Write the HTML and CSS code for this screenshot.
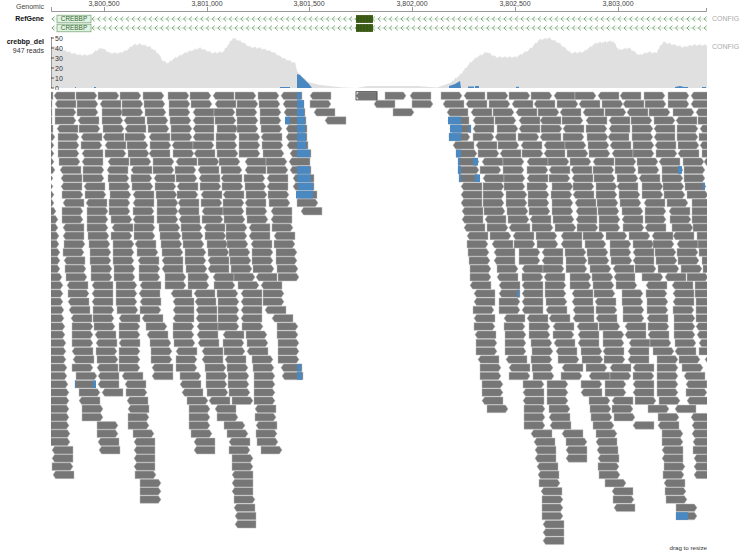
FILE: index.html
```html
<!DOCTYPE html>
<html lang="en">
<head>
  <meta charset="UTF-8">
  <title>crebbp_del</title>
  <link rel="stylesheet" href="styles.css">
</head>
<body>
  <div class="browser">
    <div class="track ruler-track">
      <div class="track-name plain">Genomic</div>
      <svg id="ruler" class="canvas" width="656" height="13" viewBox="51 0 656 13"></svg>
    </div>
    <div class="track gene-track">
      <div class="track-name">RefGene</div>
      <svg id="genes" class="canvas" width="656" height="22" viewBox="51 13 656 22"></svg>
      <div class="config">CONFIG</div>
    </div>
    <div class="track coverage-track">
      <div class="track-name">
        crebbp_del
        <span class="reads-count">947 reads</span>
      </div>
      <svg id="coverage" class="canvas" width="656" height="55" viewBox="51 35 656 55"></svg>
      <div class="config">CONFIG</div>
    </div>
    <div class="track reads-track">
      <div class="track-name"></div>
      <svg id="reads" class="canvas" width="656" height="456" viewBox="51 90 656 456"></svg>
    </div>
    <div class="resize-row">drag to resize</div>
  </div>
  <script src="tracks.js"></script>
</body>
</html>
```
FILE: styles.css
```css
body {
  margin: 0;
  background: #fff;
  font-family: "Liberation Sans", Arial, sans-serif;
  font-size: 7px;
  color: #222;
}

.browser {
  width: 746px;
  height: 554px;
  overflow: hidden;
}

.track {
  display: flex;
}

.track-name {
  width: 44px;
  margin-right: 7px;
  flex: none;
  text-align: right;
  font-weight: bold;
  color: #111;
}

.track-name.plain {
  font-weight: normal;
  color: #444;
  padding-top: 3px;
}

.canvas {
  display: block;
  flex: none;
}

.ruler-track {
  height: 13px;
}

.gene-track {
  height: 22px;
}

.gene-track .track-name {
  padding-top: 2px;
}

.coverage-track {
  height: 55px;
}

.coverage-track .track-name {
  padding-top: 2px;
  line-height: 9px;
}

.reads-count {
  display: block;
  font-weight: normal;
  color: #333;
}

.reads-track {
  height: 456px;
}

.config {
  margin-left: 5px;
  color: #aaa;
}

.gene-track .config {
  padding-top: 2px;
}

.coverage-track .config {
  padding-top: 8px;
}

.resize-row {
  width: 707px;
  margin-top: -2px;
  text-align: right;
  font-size: 6.2px;
  color: #333;
  line-height: 7px;
}

/* svg bits */
.tick-line {
  stroke: #999;
  stroke-width: 1;
  fill: none;
}

.tick-label {
  font-size: 7px;
  fill: #444;
  text-anchor: middle;
}

.gene-line {
  stroke: #b5d0b5;
  stroke-width: 0.6;
}

.chevron {
  stroke: #5d955d;
  stroke-width: 0.8;
  fill: none;
}

.gene-box {
  fill: #e3f1e3;
  stroke: #6fa36f;
  stroke-width: 0.7;
}

.gene-text {
  font-size: 6.4px;
  fill: #2e6b2e;
  text-anchor: middle;
}

.exon {
  fill: #3d5e16;
}

.exon-mark {
  stroke: #2f4a10;
  stroke-width: 0.6;
}

.cov-area {
  fill: #e0e0e0;
}

.cov-blue {
  fill: #4a88c2;
}

.axis-line {
  stroke: #999;
  stroke-width: 1;
}

.axis-tick {
  stroke: #333;
  stroke-width: 0.8;
}

.axis-label {
  font-size: 7px;
  fill: #333;
}

.read {
  fill: #767676;
  stroke: #bdbdbd;
  stroke-width: 0.5;
}

.read-box {
  fill: none;
  stroke: #333;
  stroke-width: 0.8;
}

.read-blue {
  fill: #4a88c2;
}
```
FILE: tracks.js
```js
const NS = 'http://www.w3.org/2000/svg';

function add(parent, tag, attrs, text) {
  const el = document.createElementNS(NS, tag);
  for (const k in attrs) el.setAttribute(k, attrs[k]);
  if (text) el.textContent = text;
  parent.appendChild(el);
  return el;
}

// ruler
const ruler = document.getElementById('ruler');
add(ruler, 'path', { class: 'tick-line', d: 'M51.5 7V11.5H706.5V8' });
[[104, '3,800,500'], [207, '3,801,000'], [309, '3,801,500'], [412, '3,802,000'], [515, '3,802,500'], [618, '3,803,000']].forEach(([x, label]) => {
  add(ruler, 'line', { class: 'tick-line', x1: x + 0.5, x2: x + 0.5, y1: 7, y2: 11 });
  add(ruler, 'text', { class: 'tick-label', x: x, y: 6 }, label);
});

// gene rows
const genes = document.getElementById('genes');
[19, 28].forEach(y => {
  add(genes, 'line', { class: 'gene-line', x1: 51, x2: 707, y1: y, y2: y });
  for (let x = 52; x < 705; x += 5.72) {
    add(genes, 'path', { class: 'chevron', d: `M${x + 2.6} ${y - 2.4}L${x} ${y}L${x + 2.6} ${y + 2.4}` });
  }
  add(genes, 'rect', { class: 'gene-box', x: 57, y: y - 3.8, width: 34, height: 7.6 });
  add(genes, 'text', { class: 'gene-text', x: 74, y: y + 2.4 }, 'CREBBP');
  add(genes, 'rect', { class: 'exon', x: 356, y: y - 3.9, width: 17, height: 7.8 });
  for (let x = 358; x < 373; x += 3) {
    add(genes, 'line', { class: 'exon-mark', x1: x, x2: x, y1: y - 3.9, y2: y + 3.9 });
  }
});

// coverage outline, page x : page y
const covPoints = [[51, 45], [55, 47], [63, 50], [72, 53], [80, 55], [90, 55], [97, 50], [102, 48], [110, 53], [120, 53], [127, 50], [133, 45],
  [140, 44], [150, 47], [158, 53], [163, 61], [168, 63], [175, 58], [187, 52], [200, 48], [213, 53], [223, 52], [233, 38], [242, 42], [250, 47],
  [260, 48], [273, 52], [283, 58], [295, 63], [298, 73], [308, 82], [320, 85], [343, 87.5], [357, 88], [367, 86], [390, 86], [417, 86], [437, 87.5],
  [450, 83], [460, 75], [470, 63], [477, 57], [487, 52], [496, 57], [503, 57], [516, 57], [529, 50], [539, 40], [549, 38], [559, 43], [571, 53],
  [583, 52], [596, 43], [613, 41], [619, 50], [629, 48], [639, 55], [649, 52], [656, 53], [663, 42], [683, 47], [693, 45], [707, 45]];

function covY(x) {
  for (let i = 1; i < covPoints.length; i++) {
    const [x0, y0] = covPoints[i - 1];
    const [x1, y1] = covPoints[i];
    if (x <= x1) return y0 + (y1 - y0) * (x - x0) / (x1 - x0);
  }
  return 45;
}

const coverage = document.getElementById('coverage');
let covPath = 'M51 88';
for (let x = 51; x <= 707; x++) {
  const y = covY(x);
  const wobble = y < 80 ? ((x * 37) % 5 - 2) * 0.6 : 0;
  covPath += `L${x} ${Math.min(88, y + wobble)}`;
}
add(coverage, 'path', { class: 'cov-area', d: covPath + 'L707 88Z' });

['M297 88V74L300 75L305 80L309 84L312 88Z', 'M449 88V86L455 84L460 81L461 88Z', 'M468 88V86.5L474 86.5V88Z', 'M475 88V86L479 86V88Z',
  'M75 88V87H76V88Z', 'M94 88V87H96V88Z', 'M280 88V87H290V88Z', 'M516 88V86.8H519V88Z', 'M675 88V87L680 86L684 87H688V88Z', 'M702 88V87H706V88Z'].forEach(d => {
  add(coverage, 'path', { class: 'cov-blue', d: d });
});

add(coverage, 'line', { class: 'axis-line', x1: 51.5, x2: 51.5, y1: 37, y2: 88 });
[50, 40, 30, 20, 10, 0].forEach(v => {
  const y = 88 - v;
  add(coverage, 'line', { class: 'axis-tick', x1: 51, x2: 54, y1: y, y2: y });
  add(coverage, 'text', { class: 'axis-label', x: 55, y: y + 2.5 }, String(v));
});

// one line per row of reads: start x of each read, minus = points left
const readRows = [
  '-32 -54 76 98 120 143 168 190 -213 235 258 -281 -310 -356 385 -410 441 -464 487 509 531 -554 575 -598 -620 644 668 -691',
  '-31 -55 77 -100 122 144 169 191 -215 237 259 -283 310 -374 412 -443 -466 489 -512 -534 557 -579 602 -623 645 668 -691',
  '-31 55 77 102 122 145 169 -193 214 236 260 -284 -314 393 -447 -471 493 -516 538 -560 -583 605 -627 649 673 -696',
  '-31 55 -78 102 -124 147 170 -193 215 237 260 -285 -325 -448 -473 495 -519 -540 562 -586 -609 631 654 -676 698',
  '-32 -57 79 103 -125 148 171 -193 217 237 261 -286 -450 -473 497 -519 541 -563 586 -609 632 -654 677 -700',
  '34 58 -81 -103 125 -149 171 -193 216 239 -261 -286 449 473 -495 518 -540 563 587 -608 632 -654 677 699',
  '33 58 81 -105 127 150 -172 193 216 239 262 -287 -453 -476 498 -521 -544 565 588 -610 633 -655 678 -700',
  '33 58 -82 105 128 -149 173 -194 217 239 263 -290 456 478 -500 522 -544 567 589 -612 633 656 -678 702',
  '33 59 -82 -108 130 153 -176 198 219 -245 266 -289 458 -482 503 -527 548 570 -593 615 637 -659 683 -704',
  '34 -60 83 -107 -131 153 175 -198 221 -245 267 -290 458 480 503 527 -549 -571 593 615 638 662 684',
  '32 -61 83 108 131 -154 176 -199 -221 244 -267 -293 459 -483 504 -527 549 -572 594 617 -639 662 684',
  '32 -61 -84 109 132 155 -177 200 222 245 -267 -293 -461 483 504 527 552 573 596 -617 642 663 685',
  '33 62 85 110 -133 156 177 -201 -223 246 268 -296 -461 483 506 528 551 -573 596 619 642 664 687',
  '33 -63 -86 109 -133 157 -178 201 223 -245 269 297 -461 483 506 528 552 -575 597 620 -644 667 692',
  '35 62 87 109 133 157 -178 -202 223 246 -271 -301 -462 484 507 529 552 -576 598 622 645 -669 692',
  '37 62 87 111 -133 157 -179 202 224 247 -271 -462 -485 508 -530 553 -576 599 -622 645 670 692',
  '37 -63 87 -112 134 159 181 -204 226 -249 272 -464 487 -509 532 555 577 599 623 -645 672 693',
  '38 -63 88 111 134 160 182 205 226 -249 -274 -467 490 -513 536 -561 583 606 629 -652 -673 697',
  '38 64 89 113 -135 161 183 207 227 -251 274 467 -492 514 537 -561 585 610 633 653 -677 698',
  '39 63 90 113 137 162 185 208 229 252 276 468 -494 519 -542 565 587 610 -633 655 677 699',
  '39 -64 90 113 -138 -162 185 -208 230 252 276 469 -494 519 -542 566 588 611 -633 656 678 702',
  '39 65 91 114 139 -162 186 -208 231 253 277 470 497 -522 543 566 590 -613 635 658 681 703',
  '41 66 91 114 139 165 188 -213 234 -256 278 470 -497 522 -544 570 592 -614 642 -665 687',
  '42 -67 -92 116 -140 165 188 214 238 -261 -470 -499 -522 545 570 593 616 -646 -672 695',
  '42 68 -92 116 -139 -171 -194 217 -241 263 -474 -499 -522 545 -572 594 622 646 -673 695',
  '42 -68 -92 116 -140 -173 -195 218 -241 263 -474 499 -522 546 -572 -595 622 647 -673 696',
  '43 -69 93 117 140 -173 -196 218 -241 -265 473 499 -522 -546 -573 596 623 647 673 696',
  '43 -71 93 -119 -142 -173 -196 218 -241 -272 -474 -504 -527 -549 -573 -596 623 -647 674 696',
  '44 72 94 119 146 173 -197 218 242 277 474 504 529 -553 -577 599 -625 648 674 -696',
  '44 72 -95 119 -147 173 -197 -223 246 277 -475 505 529 553 -578 603 -625 -648 674 -697',
  '45 72 -96 -119 150 174 -198 223 247 278 476 505 531 -554 -578 603 -629 650 675 -699',
  '45 -72 96 119 151 -176 -202 224 -247 278 476 505 532 -556 581 -603 -628 653 -675 699',
  '45 -73 97 119 151 176 -202 -225 252 278 -478 -506 531 558 582 604 -628 657 679 -705',
  '46 72 -97 119 -152 176 205 227 253 -281 480 -509 532 -562 586 -610 -633 657 682',
  '46 76 -98 -122 -152 180 206 228 254 -282 480 509 533 561 -589 610 633 657 -684',
  '47 75 -98 -125 -180 206 228 254 482 523 547 581 605 -633 657 -686',
  '48 79 -102 126 -182 207 229 254 482 -523 547 -581 605 -633 657 686',
  '48 -79 -127 187 -209 232 254 -482 -523 547 589 -612 635 659 -687',
  '48 82 -128 189 -215 -255 487 524 549 590 612 648 -675',
  '48 82 128 189 217 255 524 -549 591 614 658 -691',
  '48 97 128 189 224 -256 524 -550 593 -633 -658 -692',
  '49 97 133 191 227 256 -531 -562 596 662 -692',
  '49 -98 -134 -194 -229 257 -534 566 -596 662 -693',
  '-52 -99 -134 -194 229 261 -535 -566 -597 -662 693',
  '-52 -134 232 -535 -566 -598 -662 -694',
  '52 -134 232 -537 598 664 -694',
  '-53 135 -232 -538 599 663 -694',
  '140 -232 539 605 -664',
  '140 -232 -541 -612 665',
  '140 234 542 613 666',
  '-234 542 -614 676',
  '-235 542 676',
  '-235 -543',
  '-543',
  '-543'
];

// blue stretches on reads: row, from x, to x
const blueBits = [[0, 297, 301], [1, 297, 304], [2, 297, 304], [3, 297, 305], [3, 285, 290], [4, 297, 305], [5, 297, 306], [6, 297, 306], [7, 297, 310],
  [9, 297, 310], [10, 297, 311], [11, 298, 313], [12, 296, 313], [33, 297, 301], [34, 297, 302], [35, 75, 76], [35, 93, 96],
  [3, 448, 461], [4, 450, 462], [4, 469, 471], [5, 449, 461], [7, 456, 461], [8, 458, 460], [8, 473, 478], [9, 458, 461], [9, 678, 682], [10, 459, 461], [10, 475, 480],
  [11, 703, 705], [24, 517, 519], [51, 676, 688]];

const readsSvg = document.getElementById('reads');
const TOP = 92, PITCH = 8.24, H = 7.6, W = 21, TIP = 2.6;

function readShape(x, y, left) {
  if (left) {
    return `${x + TIP},${y} ${x + W},${y} ${x + W},${y + H} ${x + TIP},${y + H} ${x},${y + H / 2}`;
  }
  return `${x},${y} ${x + W - TIP},${y} ${x + W},${y + H / 2} ${x + W - TIP},${y + H} ${x},${y + H}`;
}

readRows.forEach((line, row) => {
  const y = TOP + row * PITCH;
  line.split(' ').forEach(v => {
    const n = Number(v);
    add(readsSvg, 'polygon', { class: 'read', points: readShape(Math.abs(n), y, n < 0) });
  });
});

blueBits.forEach(([row, x0, x1]) => {
  add(readsSvg, 'rect', { class: 'read-blue', x: x0, y: TOP + row * PITCH, width: x1 - x0, height: H });
});

// the clicked read on the first row gets a box round it
add(readsSvg, 'rect', { class: 'read-box', x: 356, y: TOP - 0.3, width: 21, height: H + 0.6 });
```
